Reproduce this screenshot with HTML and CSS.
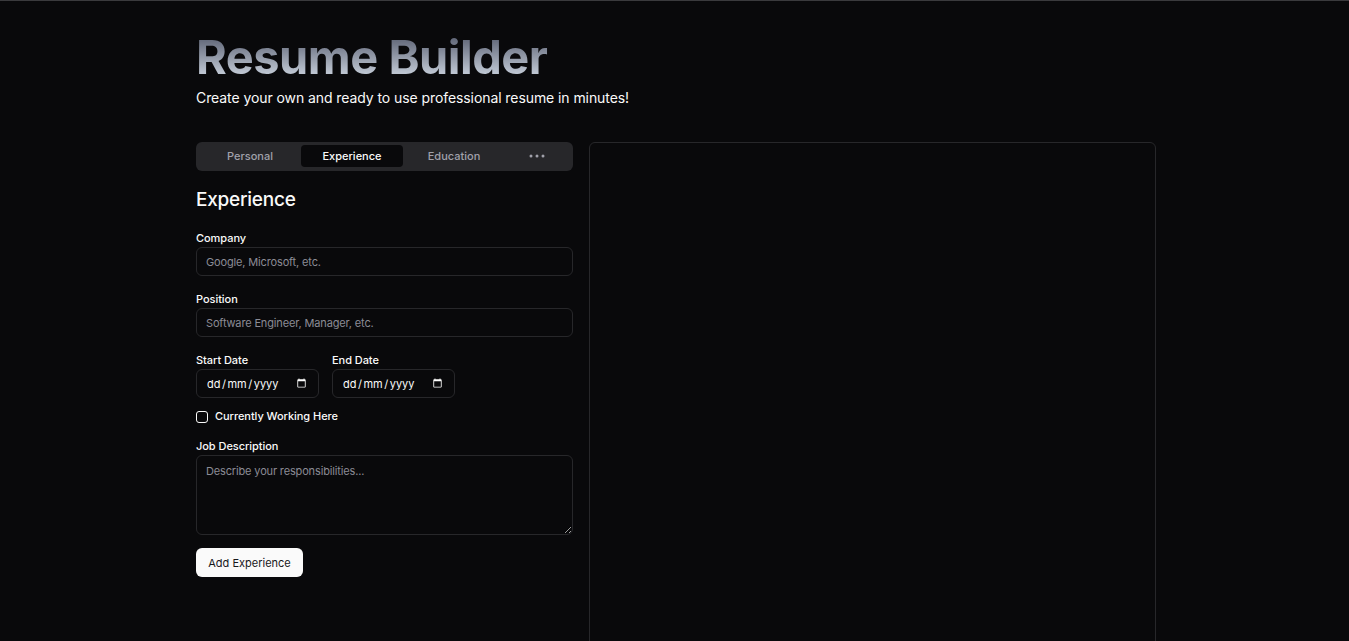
FILE: index.html
```html
<!DOCTYPE html>
<html lang="en-GB">
<head>
<meta charset="utf-8">
<title>Resume Builder</title>
<link rel="stylesheet" href="styles.css">
</head>
<body>
<main class="page">
  <header class="hero">
    <h1 class="title">Resume Builder</h1>
    <p class="subtitle">Create your own and ready to use professional resume in minutes!</p>
  </header>
  <div class="columns">
    <section class="editor">
      <nav class="tabs">
        <button class="tab" type="button">Personal</button>
        <button class="tab tab-active" type="button">Experience</button>
        <button class="tab" type="button">Education</button>
        <button class="tab tab-more" type="button" aria-label="More">
          <svg width="16" height="4" viewBox="0 0 16 4" class="dots"><circle cx="2" cy="2" r="1.5"/><circle cx="8" cy="2" r="1.5"/><circle cx="14" cy="2" r="1.5"/></svg>
        </button>
      </nav>
      <h2 class="heading">Experience</h2>
      <form class="form">
        <div class="field">
          <label class="label" for="company">Company</label>
          <input class="input" id="company" type="text" placeholder="Google, Microsoft, etc.">
        </div>
        <div class="field">
          <label class="label" for="position">Position</label>
          <input class="input" id="position" type="text" placeholder="Software Engineer, Manager, etc.">
        </div>
        <div class="dates">
          <div class="field">
            <label class="label" for="start">Start Date</label>
            <div class="date-wrap">
              <input class="input input-date" id="start" type="date">
              <span class="date-mask"><span>dd</span><span>/</span><span>mm</span><span>/</span><span>yyyy</span></span>
            </div>
          </div>
          <div class="field">
            <label class="label" for="end">End Date</label>
            <div class="date-wrap">
              <input class="input input-date" id="end" type="date">
              <span class="date-mask"><span>dd</span><span>/</span><span>mm</span><span>/</span><span>yyyy</span></span>
            </div>
          </div>
        </div>
        <div class="check-row">
          <input class="check" id="current" type="checkbox">
          <label class="label check-label" for="current">Currently Working Here</label>
        </div>
        <div class="field">
          <label class="label" for="desc">Job Description</label>
          <textarea class="input textarea" id="desc" placeholder="Describe your responsibilities..."></textarea>
        </div>
        <button class="submit" type="button">Add Experience</button>
      </form>
    </section>
    <aside class="preview"></aside>
  </div>
</main>
</body>
</html>
```

FILE: styles.css
```css
* { box-sizing: border-box; }
html, body { margin: 0; height: 100%; overflow: hidden; }
body {
  background: #09090b;
  color: #fafafa;
  font-family: Inter, "Liberation Sans", sans-serif;
  color-scheme: dark;
  border-top: 1px solid #3a3a3d;
}
.page { width: 960px; margin-left: 196px; padding-top: 30px; }
.hero { margin-bottom: 34px; }
.title {
  margin: 0;
  font-size: 47px;
  line-height: 52px;
  font-weight: 700;
  letter-spacing: -0.5px;
  background: linear-gradient(to bottom, #63697a 15%, #bcc4d0 80%);
  -webkit-background-clip: text;
  background-clip: text;
  color: transparent;
  width: max-content;
}
.subtitle { margin: 5px 0 0; font-size: 14px; line-height: 20px; letter-spacing: -0.08px; }
.columns { display: flex; gap: 16px; align-items: flex-start; }
.editor { width: 377px; flex: none; }
.preview {
  flex: 1;
  height: 842px;
  border: 1px solid #27272a;
  border-radius: 6px;
}
.tabs {
  display: grid;
  grid-template-columns: repeat(3, 102px) 64px;
  padding: 3px 4px 4px 3px;
  background: #27272a;
  border-radius: 6px;
  height: 29px;
}
.tab {
  border: 0;
  background: transparent;
  color: #a1a1aa;
  font: 500 11px/16px Inter, sans-serif;
  border-radius: 4px;
  padding: 0;
  cursor: pointer;
}
.tab-active { background: #09090b; color: #fafafa; }
.dots { fill: #a1a1aa; display: block; margin: 0 auto; }
.heading { margin: 15px 0 0; font-size: 19px; line-height: 28px; font-weight: 500; letter-spacing: -0.25px; }
.form { display: flex; flex-direction: column; margin-top: 17px; }
.field { display: flex; flex-direction: column; gap: 2px; margin-bottom: 16px; }
.label { font-size: 11px; line-height: 14px; font-weight: 500; color: #fafafa; letter-spacing: -0.05px; }
.input {
  display: block;
  width: 100%;
  height: 29px;
  padding: 0 9px;
  background: transparent;
  border: 1px solid #27272a;
  border-radius: 6px;
  color: #fafafa;
  font: 400 11px/16px Inter, sans-serif;
  outline: none;
}
.input::placeholder { color: #8b8b95; letter-spacing: -0.15px; }
.dates { display: flex; gap: 13px; margin-bottom: -4px; }
.date-wrap { position: relative; width: 123px; height: 29px; }
.input-date::-webkit-datetime-edit { color: transparent; }
.date-mask {
  position: absolute;
  left: 11px;
  top: 0;
  height: 29px;
  display: flex;
  align-items: center;
  gap: 1.5px;
  font-size: 11px;
  pointer-events: none;
}
.check-row { display: flex; align-items: center; gap: 7px; height: 14px; margin-bottom: 15px; }
.check {
  appearance: none;
  margin: 0;
  width: 12px;
  height: 12px;
  border: 1px solid #fafafa;
  border-radius: 3px;
  background: transparent;
}
.check-label { padding-bottom: 2px; }
.textarea { height: 80px; padding: 7px 9px; resize: vertical; }
.form .field:last-of-type { margin-bottom: 13px; }
.submit {
  align-self: flex-start;
  width: 107px;
  height: 29px;
  border: 0;
  border-radius: 6px;
  background: #fafafa;
  color: #18181b;
  font: 400 11px/16px Inter, sans-serif;
  padding: 0;
}
```
